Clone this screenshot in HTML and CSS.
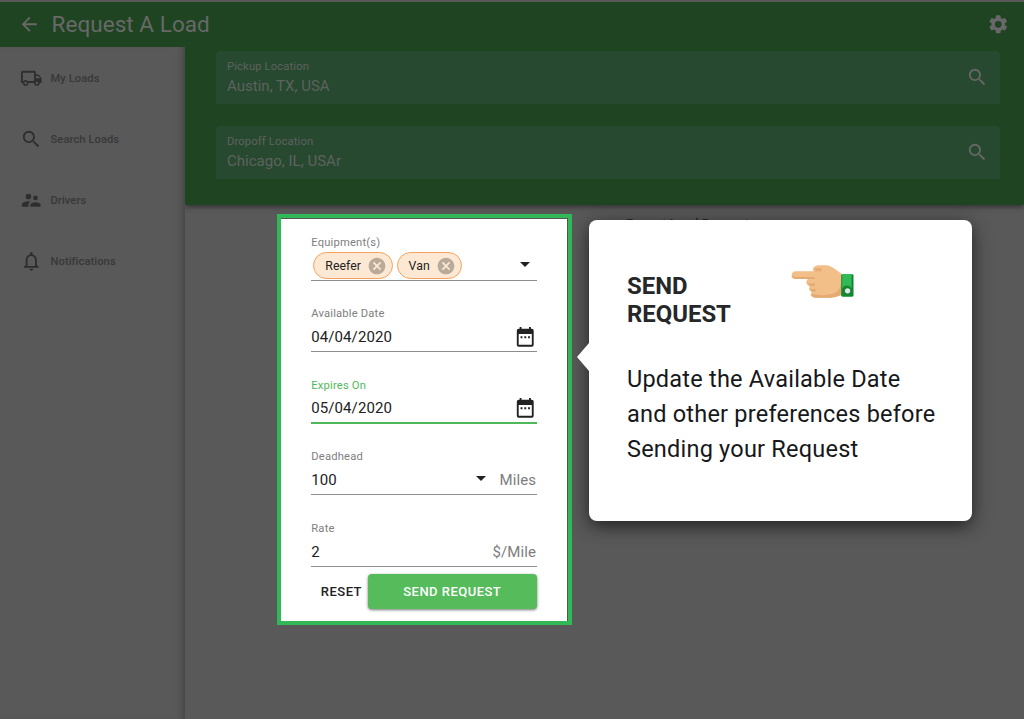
FILE: index.html
```html
<!DOCTYPE html>
<html lang="en">
<head>
<meta charset="utf-8">
<title>Request A Load</title>
<link rel="stylesheet" href="styles.css">
</head>
<body>
<svg width="0" height="0" class="defs">
  <symbol id="search" viewBox="0 0 24 24"><path d="M15.5 14h-.79l-.28-.27A6.47 6.47 0 0 0 16 9.5 6.5 6.5 0 1 0 9.5 16c1.61 0 3.09-.59 4.23-1.57l.27.28v.79l5 4.99L20.49 19l-4.99-5zm-6 0C7.01 14 5 11.99 5 9.5S7.01 5 9.5 5 14 7.01 14 9.5 11.99 14 9.5 14z"/></symbol>
  <symbol id="calendar" viewBox="0 0 24 24"><path fill-rule="evenodd" d="M19 3h-1V1h-2v2H8V1H6v2H5a2 2 0 0 0-2 2v15a2 2 0 0 0 2 2h14a2 2 0 0 0 2-2V5a2 2 0 0 0-2-2zM5 8.5h14V20H5zM7 11v2h2v-2zM11 11v2h2v-2zM15 11v2h2v-2z"/></symbol>
  <symbol id="cancel" viewBox="0 0 24 24"><path d="M12 2C6.47 2 2 6.47 2 12s4.47 10 10 10 10-4.47 10-10S17.53 2 12 2zm5 13.59L15.59 17 12 13.41 8.41 17 7 15.59 10.59 12 7 8.41 8.41 7 12 10.59 15.59 7 17 8.41 13.41 12z"/></symbol>
  <symbol id="arrow-down" viewBox="0 0 10 5"><path d="M0 0h10L5 5z"/></symbol>
</svg>
<div class="app">
  <header class="topbar">
    <svg class="icon back" viewBox="0 0 24 24"><path d="M20 11H7.83l5.59-5.59L12 4l-8 8 8 8 1.41-1.41L7.83 13H20z"/></svg>
    <h1 class="title">Request A Load</h1>
    <svg class="icon settings" viewBox="0 0 24 24"><path d="M19.14 12.94c.04-.3.06-.61.06-.94s-.02-.64-.07-.94l2.03-1.58a.49.49 0 0 0 .12-.61l-1.92-3.32a.488.488 0 0 0-.59-.22l-2.39.96a7.03 7.03 0 0 0-1.62-.94l-.36-2.54a.484.484 0 0 0-.48-.41h-3.84c-.24 0-.43.17-.47.41l-.36 2.54c-.59.24-1.13.57-1.62.94l-2.39-.96a.48.48 0 0 0-.59.22L2.74 8.87c-.12.21-.08.47.12.61l2.03 1.58c-.05.3-.09.63-.09.94s.02.64.07.94l-2.03 1.58a.49.49 0 0 0-.12.61l1.92 3.32c.12.22.37.29.59.22l2.39-.96c.5.38 1.03.7 1.62.94l.36 2.54c.05.24.24.41.48.41h3.84c.24 0 .44-.17.47-.41l.36-2.54c.59-.24 1.13-.56 1.62-.94l2.39.96c.22.08.47 0 .59-.22l1.92-3.32a.48.48 0 0 0-.12-.61zM12 15.6a3.6 3.6 0 1 1 0-7.2 3.6 3.6 0 0 1 0 7.2z"/></svg>
  </header>
  <div class="body">
    <nav class="sidebar">
      <a class="nav-item"><svg class="icon" viewBox="0 0 24 24"><path fill-rule="evenodd" d="M3 4h12a2 2 0 0 1 2 2v2h3l3 4v5h-2a3 3 0 0 1-6 0H9a3 3 0 0 1-6 0H1V6a2 2 0 0 1 2-2zm0 2v9h.8a3 3 0 0 1 4.400 0H15V6zm14 3.500V12h4.460L19.500 9.500zM6 15.700a1.300 1.300 0 1 0 0 2.600 1.300 1.300 0 0 0 0-2.600zm12 0a1.300 1.300 0 1 0 0 2.600 1.300 1.300 0 0 0 0-2.600z"/></svg><span>My Loads</span></a>
      <a class="nav-item"><svg class="icon"><use href="#search"/></svg><span>Search Loads</span></a>
      <a class="nav-item"><svg class="icon drivers" viewBox="0 0 24 24"><path d="M16.500 12a2.500 2.500 0 1 0 0-5 2.500 2.500 0 0 0 0 5zM9 11a3 3 0 1 0 0-6 3 3 0 0 0 0 6zm7.500 3c-1.830 0-5.500.92-5.500 2.750V19h11v-2.250c0-1.830-3.670-2.750-5.500-2.750zM9 13c-2.330 0-7 1.170-7 3.500V19h7v-2.250c0-.85.33-2.340 2.370-3.470C10.500 13.100 9.660 13 9 13z"/></svg><span>Drivers</span></a>
      <a class="nav-item"><svg class="icon" viewBox="0 0 24 24"><path d="M12 22c1.100 0 2-.9 2-2h-4c0 1.100.9 2 2 2zm6-6v-5c0-3.070-1.630-5.640-4.500-6.320V4a1.500 1.500 0 0 0-3 0v.68C7.640 5.360 6 7.920 6 11v5l-2 2v1h16v-1zm-2 1H8v-6c0-2.480 1.510-4.500 4-4.500s4 2.020 4 4.500z"/></svg><span>Notifications</span></a>
    </nav>
    <main class="content">
      <section class="locations">
        <div class="location"><div><div class="loc-label">Pickup Location</div><div class="loc-value">Austin, TX, USA</div></div><svg class="icon"><use href="#search"/></svg></div>
        <div class="location"><div><div class="loc-label">Dropoff Location</div><div class="loc-value">Chicago, IL, USAr</div></div><svg class="icon"><use href="#search"/></svg></div>
      </section>
      <h2 class="recent">Recent Load Requests</h2>
    </main>
  </div>
</div>

<form class="request-form">
  <div class="field">
    <label>Equipment(s)</label>
    <div class="control chips">
      <span class="chip">Reefer<svg><use href="#cancel"/></svg></span>
      <span class="chip">Van<svg><use href="#cancel"/></svg></span>
      <svg class="caret"><use href="#arrow-down"/></svg>
    </div>
  </div>
  <div class="field">
    <label>Available Date</label>
    <div class="control low"><span>04/04/2020</span><svg class="cal"><use href="#calendar"/></svg></div>
  </div>
  <div class="field active">
    <label>Expires On</label>
    <div class="control"><span>05/04/2020</span><svg class="cal"><use href="#calendar"/></svg></div>
  </div>
  <div class="field">
    <label>Deadhead</label>
    <div class="control low"><span>100</span><svg class="caret"><use href="#arrow-down"/></svg><span class="unit">Miles</span></div>
  </div>
  <div class="field">
    <label>Rate</label>
    <div class="control low"><span>2</span><span class="unit">$/Mile</span></div>
  </div>
  <div class="actions"><button type="button" class="reset">RESET</button><button type="button" class="send">SEND REQUEST</button></div>
</form>

<aside class="callout">
  <div class="callout-head">
    <h2>SEND REQUEST</h2>
    <svg class="hand" viewBox="0 0 64 34">
      <path fill="#f1bf87" d="M4 6h19c-2-3 1-6 6-6h6c4 0 7 2 10 4l7 5v20c-4 2-7 4-13 4H25c-4 0-5-3-4-6-3-1-3-4-2-6-4-1-4-5-2-7H5C0 14-1 7 4 6z"/>
      <path fill="#e5aa71" d="M1 10c1 2 3 2 5 2h18v2H5c-3 0-5-2-4-4zM24 3h7v3h-6zM16 17c2 2 5 2 8 1v3h-5zM18 23c2 2 4 1 7 1v3h-4zM20 29c9 2 18 2 25-1 4-2 6-8 7-14v16c-5 2-8 3-14 3H25c-3 0-5-2-5-4z"/>
      <rect x="51" y="9" width="12.500" height="23" rx="1.500" fill="#12872f"/>
      <path fill="#31bb57" d="M52 9h9.500v15a5 5 0 0 0-9.500 0z"/>
      <circle cx="57.500" cy="26" r="2.700" fill="#e3e4ed"/>
    </svg>
  </div>
  <p>Update the Available Date and other preferences before Sending your Request</p>
</aside>
</body>
</html>
```
FILE: styles.css
```css
* { box-sizing: border-box; }
body { margin: 0; width: 1024px; height: 719px; overflow: hidden; position: relative; font-family: Roboto, sans-serif; background: #595959; }
h1, h2, p { margin: 0; }
.defs { position: absolute; }
svg { display: block; flex: none; fill: currentColor; }
.icon { width: 22.5px; height: 22.5px; }
.app { height: 719px; display: flex; flex-direction: column; padding-top: 2px; }
.topbar { height: 45px; flex: none; background: #1f4421; color: #686868; display: flex; align-items: center; padding: 0 15px 0 18px; }
.title { font-size: 22.500px; line-height: 26px; font-weight: 400; letter-spacing: .05px; margin: 0 0 1px 11px; flex: 1; }
.body { flex: 1; display: flex; min-height: 0; }
.sidebar { width: 185px; flex: none; padding-top: 1px; color: #2e2e2e; box-shadow: inset -7px 0 7px -5px #444; }
.nav-item { height: 61px; display: flex; align-items: center; gap: 8px; padding-left: 20px; font-size: 11.200px; font-weight: 500; letter-spacing: .06px; }
.nav-item span { color: #383838; }
.content { flex: 1; }
.locations { height: 158px; padding: 4px 24.500px 0 30.500px; display: flex; flex-direction: column; gap: 22.500px; background: #1f4421; box-shadow: 0 2px 5px #333; clip-path: inset(0 0 -10px 0); }
.location { height: 52.700px; border-radius: 4px 4px 0 0; background: #27492f; color: #5e625f; display: flex; justify-content: space-between; padding: 9px 11.400px 0 11.500px; }
.location .icon { margin-top: 6px; color: #666; }
.loc-label { font-size: 11.200px; line-height: 14px; letter-spacing: .15px; }
.loc-value { font-size: 15px; line-height: 24px; letter-spacing: .02px; }
.recent { margin: 10px 0 0 441px; font-size: 13px; line-height: 18px; font-weight: 500; color: #222; }
.request-form { position: absolute; left: 277px; top: 214px; width: 295px; height: 411px; border: 4px solid #31b957; background: #fff; padding: 16px 31.500px 0 30.300px; box-shadow: inset -1px 1px 0 #555; color: #222; }
.field { height: 71.500px; }
.field label { display: block; font-size: 11.200px; line-height: 16px; padding-top: .7px; height: 16px; letter-spacing: .18px; color: #808080; }
.control { height: 30.500px; display: flex; align-items: center; justify-content: space-between; border-bottom: 1px solid #8d8d8d; font-size: 15px; letter-spacing: .08px; }
.active label { color: #4fb95a; }
.active .control { border-bottom: 2px solid #4fb95a; height: 31px; }
.cal { width: 22.500px; height: 22.500px; margin-top: 2px; }
.caret { width: 10px; height: 5px; }
.low { padding-top: 2px; }
.low .cal { margin-top: 0; }
.low .caret { margin-left: auto; margin-right: 14px; margin-top: -3px; }
.unit { color: #7d7d7d; margin-right: .5px; }
.chips { gap: 3.500px; padding: 1.500px 6.500px 0 2px; justify-content: flex-start; }
.chips .caret { margin-left: auto; margin-top: -2px; }
.chip { height: 27px; border: 1px solid #f7a15e; border-radius: 14px; background: #fde9d3; display: flex; align-items: center; gap: 6px; padding: 0 5px 0 11px; font-size: 12.300px; letter-spacing: .05px; }
.chip svg { width: 20px; height: 20px; color: #b9aa99; }
.actions { display: flex; justify-content: flex-end; margin-top: -18px; gap: 6px; }
button { border: 0; padding: 0; font: 500 13px Roboto, sans-serif; letter-spacing: .48px; height: 35px; }
.reset { background: none; color: #222; }
.send { width: 168.500px; border-radius: 4px; background: #55bb5b; color: #fff; box-shadow: 0 1px 3px #777; }
.callout { position: absolute; left: 589px; top: 220px; width: 383px; height: 301px; border-radius: 8px; background: #fff; padding: 52px 34px 0 38px; box-shadow: 0 5px 18px #222; }
.callout::before { content: ""; position: absolute; left: -12px; top: 123px; border: solid transparent; border-width: 14px 12px 14px 0; border-right-color: #fff; }
.callout-head { display: flex; color: #262729; }
.callout h2 { width: 164px; padding-right: 50px; font-size: 23.900px; line-height: 28px; font-weight: 700; }
.hand { width: 63px; height: 34px; margin-top: -7px; }
.callout p { margin-top: 34px; font-size: 23.500px; line-height: 35px; letter-spacing: .22px; color: #16181a; }
```
